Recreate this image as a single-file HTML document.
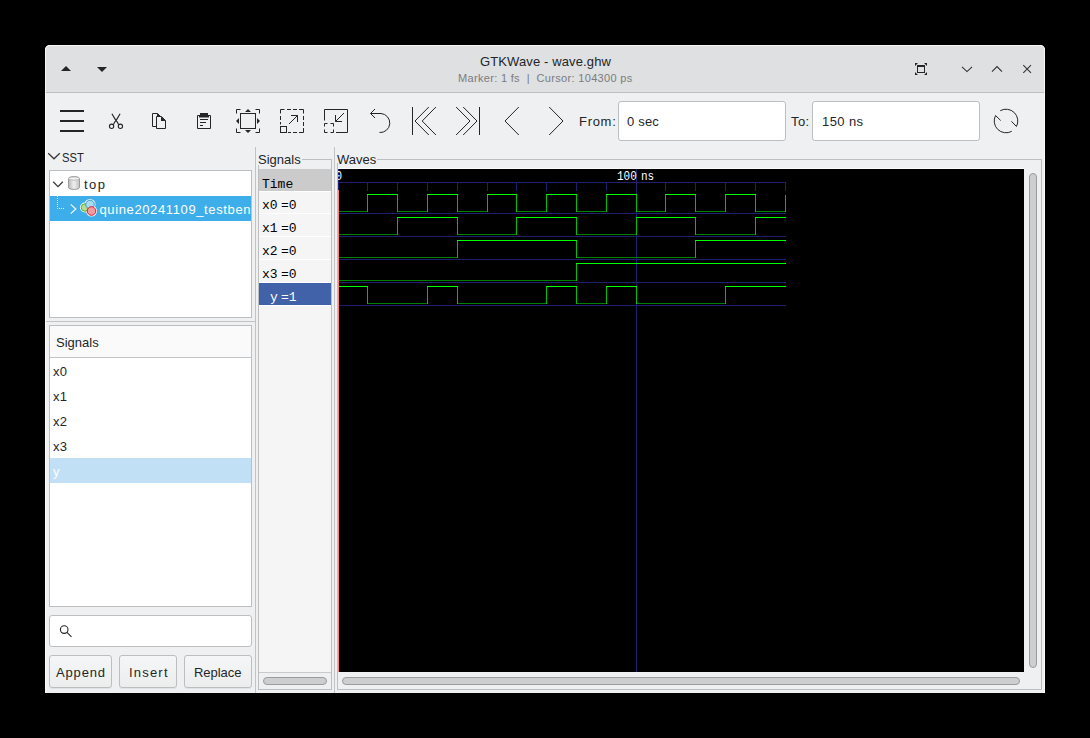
<!DOCTYPE html>
<html><head><meta charset="utf-8">
<style>
*{margin:0;padding:0;box-sizing:border-box}
html,body{width:1090px;height:738px;background:#000;overflow:hidden}
body{position:relative;font-family:"Liberation Sans",sans-serif;color:#232629}
.a{position:absolute}
#win{left:45px;top:45px;width:1000px;height:648px;background:#eff0f1;border-radius:5px 5px 0 0;overflow:hidden}
#title{left:0;top:0;width:1000px;height:48px;background:#dee0e2;border-bottom:1px solid #bdbfc1}
.t{white-space:nowrap;line-height:1}
.frame{border:1px solid #bcbebf}
.mono{font-family:"Liberation Mono",monospace}
.btn{border:1px solid #bcbebf;border-radius:3px;background:linear-gradient(#f5f6f7,#eceded);box-shadow:0 1px 0 rgba(0,0,0,0.06)}
.entry{border:1px solid #bcbebf;border-radius:3px;background:#fff}
</style></head><body>
<div id="win" class="a">
  <div id="title" class="a"></div>
</div>
<!-- all other elements use page coordinates -->
<div id="content" class="a" style="left:0;top:0;width:1090px;height:738px">

  <!-- titlebar -->
  <svg class="a" style="left:0;top:0" width="1090" height="95">
    <path d="M61 71L66 66L71 71Z" fill="#232629"/>
    <path d="M97 67L107 67L102 72Z" fill="#232629"/>
    <g stroke="#2e3033" stroke-width="1.05" fill="none">
      <path d="M962 66.8L967 71.6L972 66.8"/>
      <path d="M992 71.6L997 66.6L1002 71.6"/>
      <path d="M1023.3 65.2L1031 72.9M1031 65.2L1023.3 72.9"/>
    </g>
    <g fill="#232629">
      <rect x="917.5" y="65.5" width="7" height="7" fill="none" stroke="#232629" stroke-width="1"/>
      <rect x="917" y="65" width="8" height="2"/>
      <path d="M915 63H918L915 66Z M927 63H924L927 66Z M915 75H918L915 72Z M927 75H924L927 72Z"/>
    </g>
  </svg>

  <!-- toolbar -->
  <svg class="a" style="left:0;top:95px" width="1090" height="50" viewBox="0 95 1090 50">
    <g fill="#232629">
      <rect x="60" y="110" width="24" height="2"/><rect x="60" y="120" width="24" height="2"/><rect x="60" y="130" width="24" height="2"/>
    </g>
    <g fill="none" stroke="#232629" stroke-width="1">
      <!-- scissors -->
      <path d="M111.9 113.7L116 120.6M120.1 113.7L116 120.6M116 120.6Q114.6 121.6 113.4 124.6M116 120.6Q117.4 121.6 118.6 124.6" stroke-width="1.15"/>
      <circle cx="111.6" cy="126.3" r="2.15" stroke-width="1.1"/><circle cx="120.4" cy="126.3" r="2.15" stroke-width="1.1"/>
      <!-- copy -->
      <path d="M156.5 126.5H152.5V113.5H157.5L160.5 116.5"/>
      <path d="M156.5 116.5H161.5L165.5 120.5V128.5H156.5Z"/>
      <!-- paste -->
      <path d="M199 115.5H197.5V128.5H210.5V115.5H209"/>
      <path d="M200 119.5H208M200 122.5H206M200 125.5H203"/>
      <!-- zoom fit -->
      <path d="M236.5 113.5V109.5H240.5M255.5 109.5H259.5V113.5M259.5 128.5V132.5H255.5M240.5 132.5H236.5V128.5"/>
      <rect x="240.5" y="113.5" width="15" height="15"/>
      <!-- zoom in -->
      <path d="M280.5 113.5V109.5H284.5M287 109.5H291M293 109.5H297M299 109.5H303.5V113.5M303.5 116H303.5V120M303.5 122V126M303.5 128V132.5H299M297 132.5H293M291 132.5H288M280.5 116V120M280.5 122V124.5"/>
      <rect x="280.5" y="126.5" width="6" height="6"/>
      <path d="M289 124L297.5 115.5M291 115.5H297.5V122"/>
      <!-- zoom out -->
      <path d="M324.5 120.5V109.5H347.5V132.5H336"/>
      <path d="M324.5 126.5V123.5H327.5M330.5 123.5H333.5V126.5M333.5 129.5V132.5H330.5M327.5 132.5H324.5V129.5"/>
      <path d="M344 113L335.5 121.5M335.5 115V121.5H342"/>
      <!-- undo -->
      <path d="M370.5 113.5H381A9.5 9.5 0 0 1 379.5 132.5M375 109L370.5 113.5L375 118"/>
      <!-- first -->
      <path d="M412.5 107V135M428.8 107L415 121L428.8 135M435.9 107L422.2 121L435.9 135"/>
      <!-- last -->
      <path d="M479.5 107V135M456.1 107L470 121L456.1 135M463.2 107L477 121L463.2 135"/>
      <!-- prev/next -->
      <path d="M518.8 107L505 121L518.8 135M549.2 107L563 121L549.2 135"/>
      <!-- refresh -->
      <path d="M1000.28 110.68A11.8 11.8 0 0 1 1016.45 126.49M1011.72 131.32A11.8 11.8 0 0 1 995.56 115.52"/>
      <path d="M995.56 115.52L1000.7 120.5M1016.45 126.49L1011.4 121.3"/>
    </g>
    <g fill="#232629">
      <path d="M157 113L161.2 116.8H157Z"/>
      <path d="M161 116.5L165.8 121H161Z"/>
      <path d="M200 113H208V115H209V117.6H199V115H200Z"/>
      <path d="M248 109L251 112H245Z M236 121L239 118V124Z M260 121L257 118V124Z M248 133L251 130H245Z"/>
    </g>
  </svg>
  <div class="a t" style="left:579px;top:115px;font-size:13px;letter-spacing:0.7px">From:</div>
  <div class="a entry" style="left:618px;top:101px;width:168px;height:40px"></div>
  <div class="a t" style="left:627px;top:115px;font-size:13px;letter-spacing:0.2px">0 sec</div>
  <div class="a t" style="left:791px;top:115px;font-size:13px;letter-spacing:0.4px">To:</div>
  <div class="a entry" style="left:812px;top:101px;width:168px;height:40px"></div>
  <div class="a t" style="left:822px;top:115px;font-size:13px;letter-spacing:0.4px">150 ns</div>

  <!-- SST -->
  <svg class="a" style="left:0;top:145px" width="260" height="80" viewBox="0 145 260 80">
    <path d="M48.2 153.2L54 158.8L59.8 153.2" fill="none" stroke="#35373a" stroke-width="1.25"/>
  </svg>
  <div class="a t" style="left:62px;top:151px;font-size:13px;transform:scaleX(0.86);transform-origin:0 0">SST</div>
  <div class="a frame" style="left:49px;top:170px;width:203px;height:148px;background:#fff;overflow:hidden">
    <div class="a" style="left:0;top:25px;width:201px;height:25px;background:#3daee9"></div>
    <svg class="a" style="left:0;top:0" width="201" height="60">
      <path d="M3.2 10.8L8 15.6L12.8 10.8" fill="none" stroke="#35373a" stroke-width="1.25"/>
      <path d="M7.5 25V37.5H14" fill="none" stroke="#ffffff" stroke-width="1" stroke-dasharray="1 1"/>
      <path d="M20.7 33.4L25.8 38L20.7 42.6" fill="none" stroke="#f4fafd" stroke-width="1.15"/>
      <!-- db icon -->
      <defs><linearGradient id="dbg" x1="0" x2="1"><stop offset="0" stop-color="#b8b8b8"/><stop offset="0.5" stop-color="#f0f0f0"/><stop offset="1" stop-color="#c0c0c0"/></linearGradient></defs>
      <path d="M18.5 7.5C18.5 5 29.5 5 29.5 7.5V16.5C29.5 19 18.5 19 18.5 16.5Z" fill="url(#dbg)" stroke="#8a8a8a" stroke-width="0.8"/>
      <ellipse cx="24" cy="7.5" rx="5.5" ry="1.6" fill="#f4f4f4" stroke="#9a9a9a" stroke-width="0.6"/>
      <!-- module icon -->
      <g fill="#fff"><circle cx="35" cy="36.5" r="5"/><circle cx="40" cy="33.5" r="5.5"/><circle cx="41.5" cy="40" r="5.5"/></g>
      <circle cx="35" cy="36.5" r="3.8" fill="#b5df8f" stroke="#62a83a" stroke-width="1"/>
      <circle cx="40" cy="33.5" r="4.3" fill="#a6dcf3" stroke="#3c98c8" stroke-width="1"/>
      <circle cx="41.5" cy="40" r="4.3" fill="#f39a9e" stroke="#d0202c" stroke-width="1"/>
    </svg>
    <div class="a t" style="left:34px;top:7px;font-size:13px;color:#232629;letter-spacing:1.4px">top</div>
    <div class="a t" style="left:49.5px;top:32px;font-size:13px;color:#fff;letter-spacing:0.62px">quine20241109_testbench</div>
  </div>
  <!-- pane separators -->
  <div class="a" style="left:46px;top:321px;width:209px;height:1px;background:#c2c3c5"></div>
  <div class="a" style="left:255px;top:147px;width:1px;height:546px;background:#c2c3c5"></div>
  <div class="a" style="left:334px;top:147px;width:1px;height:546px;background:#c2c3c5"></div>
  <!-- signals list -->
  <div class="a frame" style="left:49px;top:325px;width:203px;height:282px;background:#fff;overflow:hidden">
    <div class="a" style="left:0;top:0;width:201px;height:32px;background:#fafafa;border-bottom:1px solid #c3c4c6"></div>
    <div class="a t" style="left:6px;top:10px;font-size:13px">Signals</div>
    <div class="a t" style="left:3px;top:39px;font-size:13px;letter-spacing:0.3px">x0</div>
    <div class="a t" style="left:3px;top:64px;font-size:13px;letter-spacing:0.3px">x1</div>
    <div class="a t" style="left:3px;top:89px;font-size:13px;letter-spacing:0.3px">x2</div>
    <div class="a t" style="left:3px;top:114px;font-size:13px;letter-spacing:0.3px">x3</div>
    <div class="a" style="left:0;top:132px;width:201px;height:25px;background:#c2e0f5"></div>
    <div class="a t" style="left:3px;top:139px;font-size:13px;color:#fcfcfc">y</div>
  </div>
  <!-- search -->
  <div class="a entry" style="left:49px;top:615px;width:203px;height:32px"></div>
  <svg class="a" style="left:55px;top:620px" width="25" height="22" viewBox="55 620 25 22">
    <circle cx="64.2" cy="629.6" r="3.8" fill="none" stroke="#232629" stroke-width="1.1"/>
    <path d="M67 632.4L71.5 636.9" stroke="#232629" stroke-width="1.1"/>
  </svg>
  <!-- buttons -->
  <div class="a btn" style="left:49px;top:655px;width:63px;height:33px"></div>
  <div class="a t" style="left:56px;top:666px;font-size:13px;letter-spacing:0.85px">Append</div>
  <div class="a btn" style="left:119px;top:655px;width:58px;height:33px"></div>
  <div class="a t" style="left:129px;top:666px;font-size:13px;letter-spacing:1.2px">Insert</div>
  <div class="a btn" style="left:184px;top:655px;width:68px;height:33px"></div>
  <div class="a t" style="left:194px;top:666px;font-size:13px;letter-spacing:-0.05px">Replace</div>

  <!-- Signals frame -->
  <div class="a" style="left:258px;top:159px;width:74px;height:531px;border:1px solid #bcbebf;border-top-color:#bcbebf"></div>
  <div class="a t" style="left:258px;top:153px;height:12px;font-size:13px;background:#eff0f1;padding-right:1px">Signals</div>
  <div class="a" style="left:259px;top:169px;width:72px;height:504px;background:#f5f5f5;border-bottom:1px solid #c8c9ca"></div>
  <div class="a" style="left:259px;top:169px;width:72px;height:22px;background:#cbcbcb"></div>
  <div class="a" style="left:259px;top:191px;width:72px;height:1px;background:#fff"></div>
  <div class="a" style="left:259px;top:213px;width:72px;height:1px;background:#fff"></div>
  <div class="a" style="left:259px;top:236px;width:72px;height:1px;background:#fff"></div>
  <div class="a" style="left:259px;top:259px;width:72px;height:1px;background:#fff"></div>
  <div class="a" style="left:259px;top:282px;width:72px;height:1px;background:#fff"></div>
  <div class="a" style="left:259px;top:283px;width:72px;height:22px;background:#4162a9"></div>
  <div class="a" style="left:259px;top:305px;width:72px;height:1px;background:#fff"></div>
  <div class="a t mono" style="left:262px;top:178px;font-size:13px;color:#000">Time</div>
  <div class="a t mono" style="left:262px;top:199px;font-size:13px;color:#000">x0</div><div class="a t mono" style="left:281px;top:199px;font-size:13px;color:#000">=0</div>
  <div class="a t mono" style="left:262px;top:222px;font-size:13px;color:#000">x1</div><div class="a t mono" style="left:281px;top:222px;font-size:13px;color:#000">=0</div>
  <div class="a t mono" style="left:262px;top:245px;font-size:13px;color:#000">x2</div><div class="a t mono" style="left:281px;top:245px;font-size:13px;color:#000">=0</div>
  <div class="a t mono" style="left:262px;top:268px;font-size:13px;color:#000">x3</div><div class="a t mono" style="left:281px;top:268px;font-size:13px;color:#000">=0</div>
  <div class="a t mono" style="left:270px;top:291px;font-size:13px;color:#fff">y</div><div class="a t mono" style="left:281px;top:291px;font-size:13px;color:#fff">=1</div>
  <div class="a" style="left:263px;top:677px;width:64px;height:8px;border-radius:4px;background:#cdcecf;border:1px solid #9b9c9e"></div>
  <!-- Waves frame -->
  <div class="a" style="left:337px;top:159px;width:705px;height:531px;border:1px solid #bcbebf"></div>
  <div class="a t" style="left:337px;top:153px;height:10px;font-size:13px;background:#eff0f1;padding-right:1px">Waves</div>
  <div class="a" style="left:338px;top:168px;width:686px;height:1px;background:#fafafa"></div>
  <div class="a" style="left:338px;top:169px;width:686px;height:503px;background:#000"></div>
  <svg class="a" style="left:338px;top:169px" width="686" height="503" viewBox="338 169 686 503" shape-rendering="crispEdges">
    <g stroke="#202070" stroke-width="1" fill="none">
      <path d="M338 182.5H786"/>
      <path d="M367.5 182V191M397.5 182V191M427.5 182V191M457.5 182V191M487.5 182V191M516.5 182V191M546.5 182V191M576.5 182V191M606.5 182V191M636.5 182V191M665.5 182V191M695.5 182V191M725.5 182V191M755.5 182V191M785.5 182V191"/>
      <path d="M636.5 169V672"/>
      <path d="M338 213.5H786M338 236.5H786M338 259.5H786M338 282.5H786M338 305.5H786"/>
      <path d="M338.5 169V190"/>
    </g>
    <path d="M367 194.5H398M427 194.5H458M487 194.5H517M546 194.5H577M606 194.5H637M665 194.5H696M725 194.5H756M397 217.5H428M427 217.5H458M516 217.5H547M546 217.5H577M636 217.5H666M665 217.5H696M755 217.5H786M457 240.5H488M487 240.5H517M516 240.5H547M546 240.5H577M695 240.5H726M725 240.5H756M755 240.5H786M576 263.5H607M606 263.5H637M636 263.5H666M665 263.5H696M695 263.5H726M725 263.5H756M755 263.5H786M338 286.5H368M427 286.5H458M546 286.5H577M606 286.5H637M725 286.5H756M755 286.5H786" stroke="#00ff00" stroke-width="1" fill="none"/>
    <path d="M338 211.5H368M397 211.5H428M457 211.5H488M516 211.5H547M576 211.5H607M636 211.5H666M695 211.5H726M755 211.5H786M338 234.5H368M367 234.5H398M457 234.5H488M487 234.5H517M576 234.5H607M606 234.5H637M695 234.5H726M725 234.5H756M338 257.5H368M367 257.5H398M397 257.5H428M427 257.5H458M576 257.5H607M606 257.5H637M636 257.5H666M665 257.5H696M338 280.5H368M367 280.5H398M397 280.5H428M427 280.5H458M457 280.5H488M487 280.5H517M516 280.5H547M546 280.5H577M367 303.5H398M397 303.5H428M457 303.5H488M487 303.5H517M516 303.5H547M576 303.5H607M636 303.5H666M665 303.5H696M695 303.5H726" stroke="#008000" stroke-width="1" fill="none"/>
    <path d="M367.5 194.5V212.0M397.5 194.5V212.0M427.5 194.5V212.0M457.5 194.5V212.0M487.5 194.5V212.0M516.5 194.5V212.0M546.5 194.5V212.0M576.5 194.5V212.0M606.5 194.5V212.0M636.5 194.5V212.0M665.5 194.5V212.0M695.5 194.5V212.0M725.5 194.5V212.0M755.5 194.5V212.0M785.5 194.5V212.0M397.5 217.5V235.0M457.5 217.5V235.0M516.5 217.5V235.0M576.5 217.5V235.0M636.5 217.5V235.0M695.5 217.5V235.0M755.5 217.5V235.0M457.5 240.5V258.0M576.5 240.5V258.0M695.5 240.5V258.0M576.5 263.5V281.0M367.5 286.5V304.0M427.5 286.5V304.0M457.5 286.5V304.0M546.5 286.5V304.0M576.5 286.5V304.0M606.5 286.5V304.0M636.5 286.5V304.0M725.5 286.5V304.0" stroke="#00c000" stroke-width="1" fill="none"/>
    <path d="M338.5 190V672" stroke="#ff8080" stroke-width="1"/>
  </svg>
  <div class="a" style="left:338px;top:169px;width:686px;height:503px;overflow:hidden">
    <div class="a t mono" style="left:-2.5px;top:3px;font-size:11px;color:#fff;transform:scaleY(1.15);transform-origin:0 100%">0</div>
    <div class="a t mono" style="left:279px;top:3px;font-size:11px;color:#fff;transform:scaleY(1.15);transform-origin:0 100%">100</div>
    <div class="a t mono" style="left:303px;top:3px;font-size:11px;color:#fff;transform:scaleY(1.15);transform-origin:0 100%">ns</div>
  </div>
  <div class="a" style="left:342px;top:677px;width:678px;height:8px;border-radius:4px;background:#cdcecf;border:1px solid #9b9c9e"></div>
  <div class="a" style="left:1029px;top:173px;width:8px;height:495px;border-radius:4px;background:#cdcecf;border:1px solid #9b9c9e"></div>
  <div class="a t" style="left:480px;top:55px;font-size:13px;color:#232629;letter-spacing:0.12px">GTKWave - wave.ghw</div>
  <div class="a t" style="left:458px;top:73px;font-size:11px;color:#7b7c7e;letter-spacing:0.32px">Marker: 1 fs &nbsp;| &nbsp;Cursor: 104300 ps</div>
  <div class="a" style="left:45px;top:45px;width:1000px;height:648px;border:1px solid rgba(255,255,255,0.75);border-bottom:0;border-radius:5px 5px 0 0"></div>
</div>
</body></html>
